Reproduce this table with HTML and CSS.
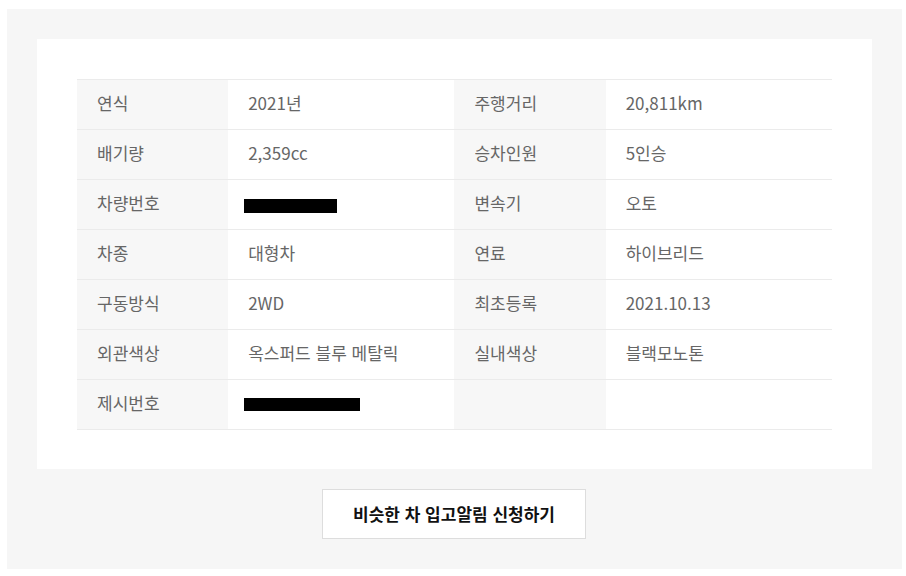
FILE: index.html
```html
<!DOCTYPE html>
<html lang="ko">
<head>
<meta charset="utf-8">
<title>차량 정보</title>
<link rel="stylesheet" href="styles.css">
</head>
<body>
<div class="wrap">
  <div class="card">
    <table class="spec">
      <colgroup>
        <col class="c-th"><col class="c-td"><col class="c-th"><col class="c-td">
      </colgroup>
      <tbody>
        <tr><th>연식</th><td>2021년</td><th>주행거리</th><td>20,811km</td></tr>
        <tr><th>배기량</th><td>2,359cc</td><th>승차인원</th><td>5인승</td></tr>
        <tr><th>차량번호</th><td><span class="mask mask-1"></span></td><th>변속기</th><td>오토</td></tr>
        <tr><th>차종</th><td>대형차</td><th>연료</th><td>하이브리드</td></tr>
        <tr><th>구동방식</th><td>2WD</td><th>최초등록</th><td>2021.10.13</td></tr>
        <tr><th>외관색상</th><td>옥스퍼드 블루 메탈릭</td><th>실내색상</th><td>블랙모노톤</td></tr>
        <tr><th>제시번호</th><td><span class="mask mask-2"></span></td><th></th><td></td></tr>
      </tbody>
    </table>
  </div>
  <div class="actions">
    <button class="btn" type="button">비슷한 차 입고알림 신청하기</button>
  </div>
</div>
</body>
</html>
```

FILE: styles.css
```css
html, body {
  margin: 0;
  padding: 0;
  background: #ffffff;
}
body {
  font-family: "Noto Sans CJK KR", "Noto Sans", sans-serif;
}
.wrap {
  margin: 9px 4px 7px 7px;
  width: 895px;
  height: 560px;
  box-sizing: border-box;
  padding: 30px;
  background: #f6f6f6;
}
.card {
  background: #ffffff;
  padding: 40px;
  height: 430px;
  box-sizing: border-box;
}
.spec {
  width: 755px;
  border-collapse: collapse;
  table-layout: fixed;
  border-top: 1px solid #ebebeb;
}
.c-th { width: 151px; }
.c-td { width: 226px; }
.spec th,
.spec td {
  height: 50px;
  box-sizing: border-box;
  padding: 0 0 3px 20px;
  border-bottom: 1px solid #ebebeb;
  font-size: 17px;
  font-weight: 400;
  color: #666666;
  text-align: left;
  vertical-align: middle;
  line-height: 20px;
  white-space: nowrap;
}
.spec th {
  background: #f7f7f7;
}
.spec td {
  background: #ffffff;
}
.mask {
  display: inline-block;
  vertical-align: middle;
  background: #000000;
  margin-left: -4px;
}
.mask-1 { width: 93px; height: 14px; margin-top: 2px; }
.mask-2 { width: 116px; height: 13px; margin-top: -1px; }
.actions {
  display: flex;
  justify-content: center;
  margin-top: 20px;
  padding-right: 1px;
}
.btn {
  width: 264px;
  height: 50px;
  background: #ffffff;
  border: 1px solid #dddddd;
  font-family: "Noto Sans CJK KR", "Noto Sans", sans-serif;
  font-size: 17px;
  font-weight: 700;
  color: #111111;
  padding: 0 0 2px 0;
  cursor: pointer;
}
```
